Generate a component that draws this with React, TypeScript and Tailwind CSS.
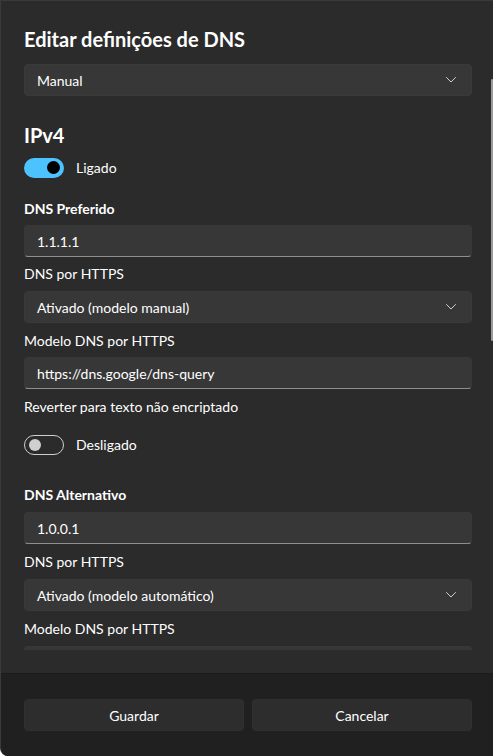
import React from "react";

function Chevron() {
  return (
    <svg width="10" height="6" viewBox="0 0 10 6" fill="none" className="shrink-0">
      <path d="M0.5 0.5 L5 5 L9.5 0.5" stroke="#d0d0d0" strokeWidth="1" strokeLinecap="round" strokeLinejoin="round" />
    </svg>
  );
}

function Select({ value, className = "" }: { value: string; className?: string }) {
  return (
    <div className={`flex h-8 items-center justify-between rounded-[4px] border border-[#3a3a3a] bg-[#373737] pl-3 pr-[15px] ${className}`}>
      <span className="text-[14px] text-white">{value}</span>
      <Chevron />
    </div>
  );
}

function TextBox({ value, className = "" }: { value: string; className?: string }) {
  return (
    <div className={`flex h-8 items-center rounded-[4px] border border-[#383838] border-b-[#8f8f8f] bg-[#373737] px-3 ${className}`}>
      <span className="text-[14px] text-white">{value}</span>
    </div>
  );
}

function Toggle({ on, label, className = "" }: { on: boolean; label: string; className?: string }) {
  return (
    <div className={`flex items-center gap-3 ${className}`}>
      {on ? (
        <div className="flex h-5 w-10 items-center justify-end rounded-full bg-[#4cc2ff] pr-1">
          <div className="h-[13px] w-[13px] rounded-full bg-black" />
        </div>
      ) : (
        <div className="flex h-5 w-10 items-center rounded-full border border-[#cfcfcf] pl-[4px]">
          <div className="h-3 w-3 rounded-full bg-[#cfcfcf]" />
        </div>
      )}
      <span className="text-[14px] text-white">{label}</span>
    </div>
  );
}

function Label({ children, bold = false, className = "" }: { children: React.ReactNode; bold?: boolean; className?: string }) {
  return (
    <div className={`h-5 text-[14px] leading-5 text-white ${bold ? "font-bold" : ""} ${className}`}>
      {children}
    </div>
  );
}

export default function App() {
  return (
    <div
      className="relative flex h-[756px] w-[493px] flex-col overflow-hidden rounded-bl-lg border-l border-t border-[#3a3a3a] bg-[#2b2b2b]"
      style={{ fontFamily: 'Lato, "Noto Sans", sans-serif' }}
    >
      <div className="relative h-[649px] overflow-hidden pl-[23px] pr-[21px] pt-[24px]">
        <h1 className="h-7 text-[20px] font-bold leading-7 text-white">Editar definições de DNS</h1>
        <Select value="Manual" className="mt-[11px]" />

        <h2 className="mt-[25px] h-7 text-[20px] font-bold leading-7 text-white">IPv4</h2>
        <Toggle on label="Ligado" className="mt-[8px]" />

        <Label bold className="mt-[21px]">DNS Preferido</Label>
        <TextBox value="1.1.1.1" className="mt-[6px]" />
        <Label className="mt-[7px]">DNS por HTTPS</Label>
        <Select value="Ativado (modelo manual)" className="mt-[7px]" />
        <Label className="mt-[8px]">Modelo DNS por HTTPS</Label>
        <TextBox value="https://dns.google/dns-query" className="mt-[6px]" />
        <Label className="mt-[8px]">Reverter para texto não encriptado</Label>
        <Toggle on={false} label="Desligado" className="mt-[17px]" />

        <Label bold className="mt-[30px]">DNS Alternativo</Label>
        <TextBox value="1.0.0.1" className="mt-[7px]" />
        <Label className="mt-[8px]">DNS por HTTPS</Label>
        <Select value="Ativado (modelo automático)" className="mt-[7px]" />
        <Label className="mt-[8px]">Modelo DNS por HTTPS</Label>
        <TextBox value="" className="mt-[7px]" />

        <div className="absolute right-0 top-[78px] h-[262px] w-[2px] rounded-full bg-[#9b9b9b]" />
      </div>
      <div className="flex-1" />
      <div className="flex h-[83px] gap-2 border-t border-[#1c1c1c] bg-[#202020] pl-[23px] pr-[21px] pt-[25px]">
        <button className="h-8 flex-1 rounded-[4px] border border-[#303030] bg-[#2d2d2d] text-[14px] text-white">
          Guardar
        </button>
        <button className="h-8 flex-1 rounded-[4px] border border-[#303030] bg-[#2d2d2d] text-[14px] text-white">
          Cancelar
        </button>
      </div>
    </div>
  );
}
